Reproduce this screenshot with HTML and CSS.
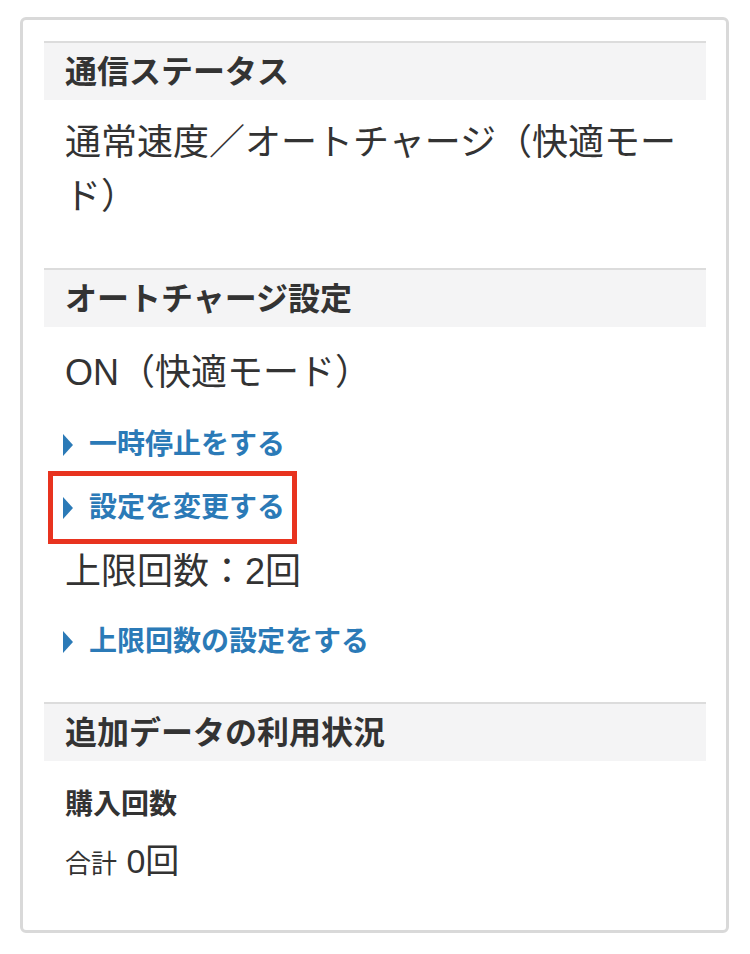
FILE: index.html
```html
<!DOCTYPE html>
<html lang="ja">
<head>
    <meta charset="UTF-8">
    <meta name="viewport" content="width=device-width, initial-scale=1.0">
    <title>ご利用状況</title>
    <link rel="stylesheet" href="styles.css">
</head>
<body>

    <div class="card">

        <section class="block">
            <h2 class="block-title">通信ステータス</h2>
            <p class="value">通常速度／オートチャージ（快適モード）</p>
        </section>

        <section class="block block-charge">
            <h2 class="block-title">オートチャージ設定</h2>
            <p class="value">ON（快適モード）</p>
            <a href="#" class="link link-first">一時停止をする</a>
            <div class="highlight">
                <a href="#" class="link">設定を変更する</a>
            </div>
            <p class="value value-limit">上限回数：2回</p>
            <a href="#" class="link">上限回数の設定をする</a>
        </section>

        <section class="block block-extra">
            <h2 class="block-title">追加データの利用状況</h2>
            <h3 class="label">購入回数</h3>
            <p class="count"><span class="count-label">合計</span> 0回</p>
        </section>

    </div>

</body>
</html>
```

FILE: styles.css
```css
body {
    margin: 0;
    font-family: "Liberation Sans", "Noto Sans CJK JP", sans-serif;
    color: #333;
    background-color: #fff;
}
.card {
    margin: 17px 21px 0 20px;
    padding: 21px 20px 0 21px;
    border: 3px solid #d9d9d9;
    border-radius: 6px;
}
.block {
    padding-bottom: 44px;
}
.block-charge {
    padding-bottom: 40px;
}
.block-extra {
    padding-bottom: 41px;
}
.block-title {
    margin: 0;
    padding: 5px 21px 4px;
    border-top: 2px solid #dcdcdc;
    background-color: #f4f4f5;
    font-size: 32px;
    line-height: 48px;
    font-weight: bold;
}
.value {
    margin: 16px 20px 0 21px;
    font-size: 36px;
    line-height: 54px;
}
.block-charge .value {
    margin-top: 19px;
}
.block-charge .value-limit {
    margin-top: 1px;
}
.link {
    display: flex;
    align-items: center;
    margin: 23px 0 0 19px;
    color: #2b7ab7;
    font-size: 28px;
    line-height: 40px;
    font-weight: bold;
    text-decoration: none;
}
.link::before {
    content: "";
    width: 0;
    height: 0;
    margin-right: 16px;
    border-left: 10px solid #2b7ab7;
    border-top: 11px solid transparent;
    border-bottom: 11px solid transparent;
}
.link-first {
    margin-top: 25px;
}
.highlight {
    width: fit-content;
    margin: 6px 0 0 4px;
    padding: 12px 7px 11px 12px;
    border: 5px solid #e8331f;
}
.highlight .link {
    margin: 0 0 0 -2px;
}
.label {
    margin: 23px 21px 0;
    font-size: 28px;
    line-height: 42px;
    font-weight: bold;
}
.count {
    margin: 10px 21px 0;
    font-size: 34px;
    line-height: 50px;
}
.count-label {
    font-size: 26px;
}
```
